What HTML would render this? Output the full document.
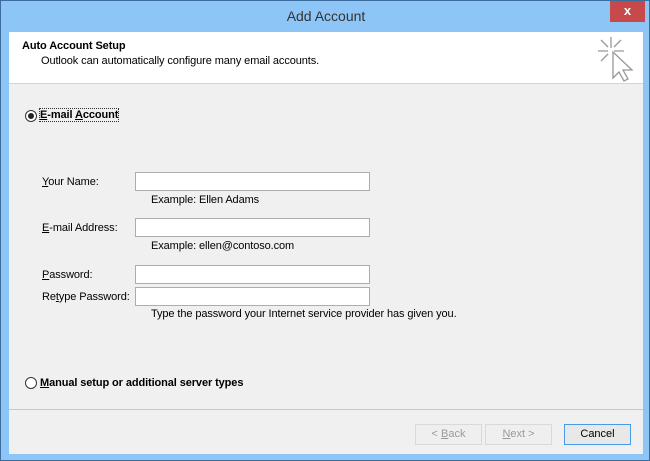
<!DOCTYPE html>
<html><head><style>
*{margin:0;padding:0;box-sizing:border-box}
body{width:650px;height:461px;background:#8fc6f4;font-family:"Liberation Sans",sans-serif;font-size:11px;color:#000;position:relative;overflow:hidden}
.win{position:absolute;left:0;top:0;width:650px;height:461px;border:1px solid #3c6c9c;background:#8dc5f6}
.title{position:absolute;left:0;top:7px;width:650px;text-align:center;font-size:14px;color:#333}
.close{position:absolute;left:609px;top:0;width:35px;height:21px;background:#c7494a;color:#fff;text-align:center;font-size:13px;line-height:20px;font-weight:bold}
.client{position:absolute;left:8px;top:31px;width:634px;height:422px;background:#f0f0f0}
.head{position:absolute;left:0;top:0;width:634px;height:52px;background:#fff;border-bottom:1px solid #d5d5d5}
.a{position:absolute;white-space:nowrap;letter-spacing:-0.1px}
.inp{position:absolute;left:126px;width:235px;height:19px;background:#fff;border:1px solid #adadad}
.radio{position:absolute;width:12px;height:12px;border-radius:50%;border:1px solid #333;background:#fff}
.btn{position:absolute;top:392px;height:21px;width:67px;border:1px solid #d9d9d9;background:#efefef;color:#9a9a9a;text-align:center;line-height:19px}
u{text-decoration:underline}
</style></head><body>
<div class="win">
<div class="title">Add Account</div>
<div class="close">x</div>
<div class="client">
 <div class="head">
  <div class="a" style="left:13px;top:8px;font-weight:bold;font-size:11px">Auto Account Setup</div>
  <div class="a" style="left:32px;top:23px;font-size:11px">Outlook can automatically configure many email accounts.</div>
  <svg class="a" style="left:588px;top:4px" width="36" height="46" viewBox="0 0 36 46" fill="none" stroke="#999" stroke-width="1.3">
   <path d="M14 1v11M4 4l7 7M1 15h10M24 4l-7 7M27 15h-10M4 25l7-7"/>
   <path d="M16 16v26l6-6 5 9 4-2-5-9h9z" fill="#fff"/>
  </svg>
 </div>
 <div class="radio" style="left:16px;top:78px"><div style="position:absolute;left:2px;top:2px;width:6px;height:6px;border-radius:50%;background:#222"></div></div>
 <div class="a" style="left:31px;top:77px;font-weight:bold;outline:1px dotted #333"><u>E</u>-mail <u>A</u>ccount</div>
 <div class="a" style="left:33px;top:144px"><u>Y</u>our Name:</div>
 <div class="inp" style="top:140px"></div>
 <div class="a" style="left:142px;top:162px">Example: Ellen Adams</div>
 <div class="a" style="left:33px;top:190px"><u>E</u>-mail Address:</div>
 <div class="inp" style="top:186px"></div>
 <div class="a" style="left:142px;top:208px">Example: ellen@contoso.com</div>
 <div class="a" style="left:33px;top:237px"><u>P</u>assword:</div>
 <div class="inp" style="top:233px"></div>
 <div class="a" style="left:33px;top:259px">Re<u>t</u>ype Password:</div>
 <div class="inp" style="top:255px"></div>
 <div class="a" style="left:142px;top:276px">Type the password your Internet service provider has given you.</div>
 <div class="radio" style="left:16px;top:345px"></div>
 <div class="a" style="left:31px;top:345px;font-weight:bold"><u>M</u>anual setup or additional server types</div>
 <div style="position:absolute;left:0;top:377px;width:634px;height:1px;background:#c8c8c8"></div>
 <div class="btn" style="left:406px">&lt; <u>B</u>ack</div>
 <div class="btn" style="left:476px"><u>N</u>ext &gt;</div>
 <div class="btn" style="left:555px;border-color:#4a9be5;background:#e8e8e8;color:#000">Cancel</div>
</div>
</div>
</body></html>
